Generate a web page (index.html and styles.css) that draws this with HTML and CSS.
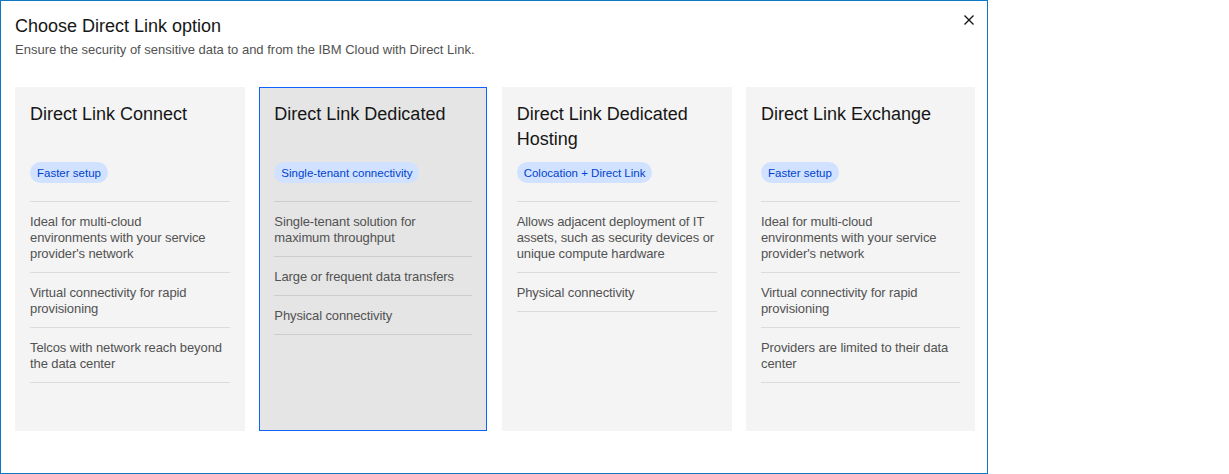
FILE: index.html
```html
<!DOCTYPE html>
<html lang="en">
<head>
<meta charset="utf-8">
<title>Choose Direct Link option</title>
<link rel="stylesheet" href="styles.css">
</head>
<body>
<div class="modal">
  <div class="modal-header">
    <div class="heading">
      <h2 class="title">Choose Direct Link option</h2>
      <p class="subtitle">Ensure the security of sensitive data to and from the IBM Cloud with Direct Link.</p>
    </div>
    <button class="close" aria-label="Close">
      <svg width="16" height="16" viewBox="0 0 16 16" aria-hidden="true"><path d="M3.5 3.5 L12.5 12.5 M12.5 3.5 L3.5 12.5" stroke="#161616" stroke-width="1.4" fill="none"/></svg>
    </button>
  </div>
  <div class="cards">
    <div class="card">
      <h3 class="card-title">Direct Link Connect</h3>
      <span class="tag">Faster setup</span>
      <ul class="features">
        <li>Ideal for multi-cloud<br>environments with your service provider's network</li>
        <li>Virtual connectivity for rapid provisioning</li>
        <li>Telcos with network reach beyond the data center</li>
      </ul>
    </div>
    <div class="card selected">
      <h3 class="card-title">Direct Link Dedicated</h3>
      <span class="tag">Single-tenant connectivity</span>
      <ul class="features">
        <li>Single-tenant solution for maximum throughput</li>
        <li>Large or frequent data transfers</li>
        <li>Physical connectivity</li>
      </ul>
    </div>
    <div class="card">
      <h3 class="card-title">Direct Link Dedicated Hosting</h3>
      <span class="tag">Colocation + Direct Link</span>
      <ul class="features">
        <li>Allows adjacent deployment of IT assets, such as security devices or unique compute hardware</li>
        <li>Physical connectivity</li>
      </ul>
    </div>
    <div class="card">
      <h3 class="card-title">Direct Link Exchange</h3>
      <span class="tag">Faster setup</span>
      <ul class="features">
        <li>Ideal for multi-cloud<br>environments with your service provider's network</li>
        <li>Virtual connectivity for rapid provisioning</li>
        <li>Providers are limited to their data center</li>
      </ul>
    </div>
  </div>
</div>
</body>
</html>
```

FILE: styles.css
```css
* { box-sizing: border-box; }

body {
  margin: 0;
  background: #ffffff;
  font-family: "Liberation Sans", Arial, sans-serif;
  color: #161616;
}

.modal {
  width: 988px;
  height: 474px;
  border: 1px solid #0f78c4;
  background: #ffffff;
  padding: 13px 12px 0 14px;
}

.modal-header {
  display: flex;
  justify-content: space-between;
  align-items: flex-start;
}

.title {
  margin: 0;
  font-size: 18px;
  line-height: 24px;
  font-weight: 400;
  color: #161616;
}

.subtitle {
  margin: 3px 0 0;
  font-size: 13px;
  line-height: 18px;
  color: #525252;
}

.close {
  margin: -2px -2px 0 0;
  width: 16px;
  height: 16px;
  padding: 0;
  border: 0;
  background: transparent;
  display: flex;
}

.cards {
  margin-top: 28px;
  width: 960px;
  display: grid;
  grid-template-columns: 230px 228px 230px 229px;
  column-gap: 14.33px;
}

.card {
  height: 344px;
  background: #f4f4f4;
  border: 1px solid transparent;
  padding: 14px 14px;
  display: flex;
  flex-direction: column;
  align-items: flex-start;
}

.card.selected {
  background: #e5e5e5;
  border-color: #0f62fe;
}

.card-title {
  margin: 0 0 10px;
  min-height: 50px;
  font-size: 18px;
  line-height: 25px;
  font-weight: 400;
  color: #161616;
}

.tag {
  display: inline-flex;
  align-items: center;
  height: 21px;
  padding: 0 7px;
  border-radius: 11px;
  background: #d0e2ff;
  color: #0043ce;
  font-size: 11.5px;
}

.features {
  list-style: none;
  margin: 18px 0 0;
  padding: 0;
  width: 100%;
  border-bottom: 1px solid rgba(0, 0, 0, 0.1);
}

.features li {
  border-top: 1px solid rgba(0, 0, 0, 0.1);
  padding: 12px 0 10px;
  font-size: 13px;
  line-height: 16px;
  letter-spacing: -0.1px;
  color: #525252;
}
```
